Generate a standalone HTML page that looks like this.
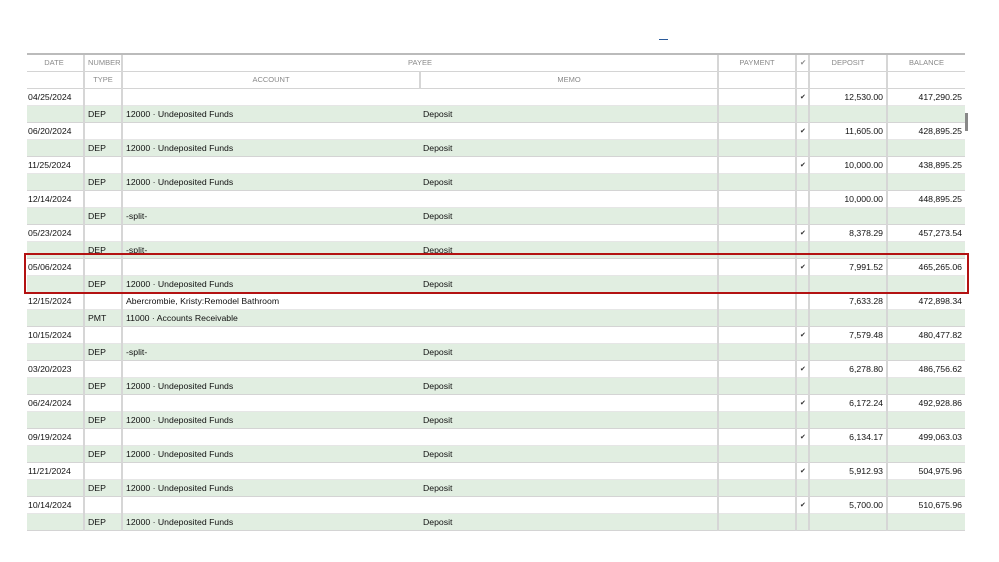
<!DOCTYPE html>
<html><head><meta charset="utf-8"><style>
body{margin:0;width:999px;height:562px;background:#fff;overflow:hidden;font-family:"Liberation Sans",Arial,sans-serif;position:relative}
table{position:absolute;left:27px;top:53px;border-collapse:collapse;table-layout:fixed;width:938px}
tr{height:17px}
td{height:17px;padding:0 3px;font-size:8.7px;color:#111;white-space:nowrap;overflow:hidden;border-left:2px solid #d6d6d6;border-bottom:1px solid #d4d4d4;box-sizing:border-box}
td:first-child{border-left:none;padding-left:1px}
tr.h td{color:#8a8a8a;font-size:7.5px;text-align:center;background:#fff}
tr.h1 td{border-top:2px solid #bbb}
tr.g td{background:#e1eee1}
tr.g td.m{border-left:none}
tr.w td{background:#fff;border-bottom:1px solid #e6e6e6}
.r{text-align:right}
.c{text-align:center;font-size:7px;color:#333}
#box{position:absolute;left:24px;top:253px;width:941px;height:37px;border:2px solid #b31212}
#th{position:absolute;left:965px;top:113px;width:3px;height:18px;background:#888}
#dash{position:absolute;left:659px;top:39px;width:9px;height:1px;background:#2a5a9a}
</style></head><body>
<div id="dash"></div>
<table>
<colgroup><col style="width:57px"><col style="width:38px"><col style="width:298px"><col style="width:298px"><col style="width:78px"><col style="width:13px"><col style="width:78px"><col style="width:78px"></colgroup>
<tr class="h h1"><td>DATE</td><td>NUMBER</td><td colspan="2">PAYEE</td><td>PAYMENT</td><td class="c">✔</td><td>DEPOSIT</td><td>BALANCE</td></tr>
<tr class="h"><td></td><td>TYPE</td><td>ACCOUNT</td><td>MEMO</td><td></td><td></td><td></td><td></td></tr>

<tr class="w"><td>04/25/2024</td><td></td><td colspan="2"></td><td></td><td class="c">✔</td><td class="r">12,530.00</td><td class="r">417,290.25</td></tr>
<tr class="g"><td></td><td>DEP</td><td>12000 · Undeposited Funds</td><td class="m">Deposit</td><td></td><td></td><td></td><td></td></tr>
<tr class="w"><td>06/20/2024</td><td></td><td colspan="2"></td><td></td><td class="c">✔</td><td class="r">11,605.00</td><td class="r">428,895.25</td></tr>
<tr class="g"><td></td><td>DEP</td><td>12000 · Undeposited Funds</td><td class="m">Deposit</td><td></td><td></td><td></td><td></td></tr>
<tr class="w"><td>11/25/2024</td><td></td><td colspan="2"></td><td></td><td class="c">✔</td><td class="r">10,000.00</td><td class="r">438,895.25</td></tr>
<tr class="g"><td></td><td>DEP</td><td>12000 · Undeposited Funds</td><td class="m">Deposit</td><td></td><td></td><td></td><td></td></tr>
<tr class="w"><td>12/14/2024</td><td></td><td colspan="2"></td><td></td><td class="c"></td><td class="r">10,000.00</td><td class="r">448,895.25</td></tr>
<tr class="g"><td></td><td>DEP</td><td>-split-</td><td class="m">Deposit</td><td></td><td></td><td></td><td></td></tr>
<tr class="w"><td>05/23/2024</td><td></td><td colspan="2"></td><td></td><td class="c">✔</td><td class="r">8,378.29</td><td class="r">457,273.54</td></tr>
<tr class="g"><td></td><td>DEP</td><td>-split-</td><td class="m">Deposit</td><td></td><td></td><td></td><td></td></tr>
<tr class="w"><td>05/06/2024</td><td></td><td colspan="2"></td><td></td><td class="c">✔</td><td class="r">7,991.52</td><td class="r">465,265.06</td></tr>
<tr class="g"><td></td><td>DEP</td><td>12000 · Undeposited Funds</td><td class="m">Deposit</td><td></td><td></td><td></td><td></td></tr>
<tr class="w"><td>12/15/2024</td><td></td><td colspan="2">Abercrombie, Kristy:Remodel Bathroom</td><td></td><td class="c"></td><td class="r">7,633.28</td><td class="r">472,898.34</td></tr>
<tr class="g"><td></td><td>PMT</td><td>11000 · Accounts Receivable</td><td class="m"></td><td></td><td></td><td></td><td></td></tr>
<tr class="w"><td>10/15/2024</td><td></td><td colspan="2"></td><td></td><td class="c">✔</td><td class="r">7,579.48</td><td class="r">480,477.82</td></tr>
<tr class="g"><td></td><td>DEP</td><td>-split-</td><td class="m">Deposit</td><td></td><td></td><td></td><td></td></tr>
<tr class="w"><td>03/20/2023</td><td></td><td colspan="2"></td><td></td><td class="c">✔</td><td class="r">6,278.80</td><td class="r">486,756.62</td></tr>
<tr class="g"><td></td><td>DEP</td><td>12000 · Undeposited Funds</td><td class="m">Deposit</td><td></td><td></td><td></td><td></td></tr>
<tr class="w"><td>06/24/2024</td><td></td><td colspan="2"></td><td></td><td class="c">✔</td><td class="r">6,172.24</td><td class="r">492,928.86</td></tr>
<tr class="g"><td></td><td>DEP</td><td>12000 · Undeposited Funds</td><td class="m">Deposit</td><td></td><td></td><td></td><td></td></tr>
<tr class="w"><td>09/19/2024</td><td></td><td colspan="2"></td><td></td><td class="c">✔</td><td class="r">6,134.17</td><td class="r">499,063.03</td></tr>
<tr class="g"><td></td><td>DEP</td><td>12000 · Undeposited Funds</td><td class="m">Deposit</td><td></td><td></td><td></td><td></td></tr>
<tr class="w"><td>11/21/2024</td><td></td><td colspan="2"></td><td></td><td class="c">✔</td><td class="r">5,912.93</td><td class="r">504,975.96</td></tr>
<tr class="g"><td></td><td>DEP</td><td>12000 · Undeposited Funds</td><td class="m">Deposit</td><td></td><td></td><td></td><td></td></tr>
<tr class="w"><td>10/14/2024</td><td></td><td colspan="2"></td><td></td><td class="c">✔</td><td class="r">5,700.00</td><td class="r">510,675.96</td></tr>
<tr class="g"><td></td><td>DEP</td><td>12000 · Undeposited Funds</td><td class="m">Deposit</td><td></td><td></td><td></td><td></td></tr>
</table>
<div id="th"></div>
<div id="box"></div>
</body></html>
